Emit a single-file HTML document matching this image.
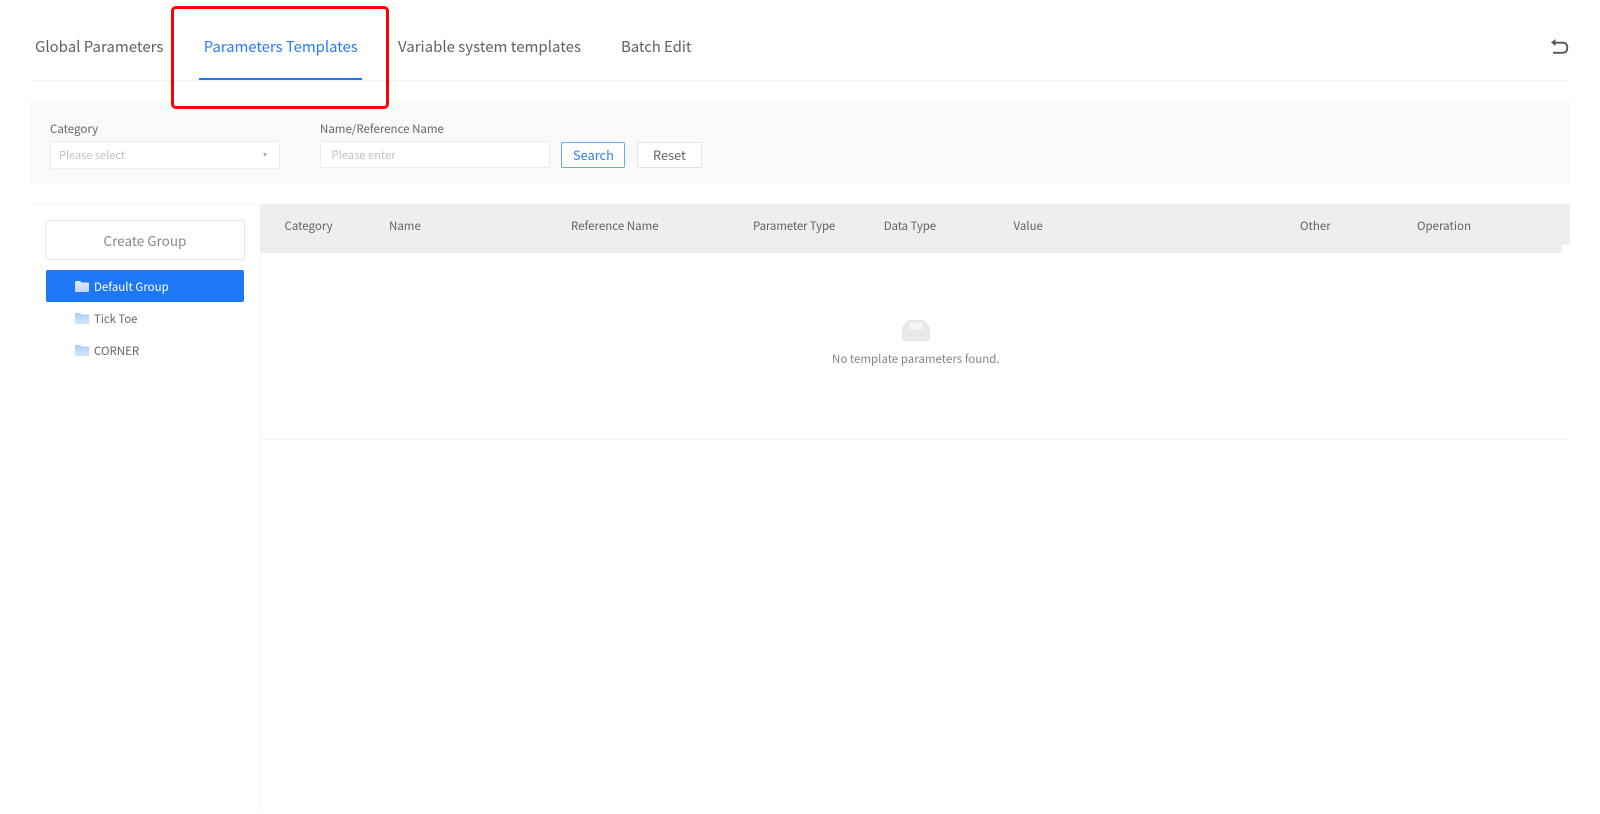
<!DOCTYPE html>
<html lang="en"><head><meta charset="utf-8"><title>Parameters Templates</title>
<style>
html,body{margin:0;padding:0;width:1600px;height:814px;overflow:hidden;background:#fff}
body{position:relative;font-family:"Noto Sans CJK SC","Liberation Sans",sans-serif;color:#666}
.a{position:absolute}
.t{position:absolute;white-space:nowrap;line-height:20px}
.tab{font-size:15px;top:37px;color:#606266}
.th{font-size:11.5px;top:216px;color:#606266}
.lb{font-size:11.5px;top:119px;color:#666}
.box{position:absolute;background:#fff;box-sizing:border-box;border:1px solid #ebebeb;border-radius:2px}
</style></head><body>
<div class="t tab" style="left:35px">Global Parameters</div>
<div class="t tab" style="left:203.700px;color:#2f7cf6;letter-spacing:-.08px">Parameters Templates</div>
<div class="t tab" style="left:398px">Variable system templates</div>
<div class="t tab" style="left:621px;letter-spacing:-.1px">Batch Edit</div>
<div class="a" style="left:30px;top:80px;width:1540px;height:1px;background:#f3f3f3"></div>
<div class="a" style="left:199px;top:78px;width:163px;height:2px;background:#1e78f5"></div>
<svg class="a" style="left:1550px;top:37px" width="20" height="20" viewBox="0 0 20 20"><path d="M1 5.500L5.500 2V9Z" fill="#555"/><path d="M5 5.700H12.500C15.700 5.700 17.300 7.600 17.300 10.800C17.300 14 15.700 15.800 12.500 15.800H3" fill="none" stroke="#555" stroke-width="1.800"/></svg>

<div class="a" style="left:30px;top:101px;width:1540px;height:83px;background:#f9f9f9"></div>
<div class="t lb" style="left:50px">Category</div>
<div class="box" style="left:50px;top:141px;width:230px;height:28px"></div>
<div class="t" style="left:59px;top:145px;font-size:11px;color:#c0c0c0">Please select</div>
<div class="a" style="left:262.500px;top:153px;width:0;height:0;border-left:2.500px solid transparent;border-right:2.500px solid transparent;border-top:4px solid #aaa"></div>
<div class="t lb" style="left:320px">Name/Reference Name</div>
<div class="box" style="left:319.500px;top:141px;width:230px;height:27px"></div>
<div class="t" style="left:331.500px;top:145px;font-size:11.200px;color:#c0c0c0">Please enter</div>
<div class="box" style="left:561px;top:142px;width:64px;height:25.500px;border-color:#6ea4f8"></div>
<div class="t" style="left:573px;top:145px;font-size:12.800px;color:#2f7cf6">Search</div>
<div class="box" style="left:637px;top:142px;width:64.500px;height:25.500px;border-color:#e2e2e2"></div>
<div class="t" style="left:653px;top:145px;font-size:12.800px;color:#666">Reset</div>

<div class="a" style="left:30px;top:204px;width:230px;height:1px;background:#f5f5f5"></div>
<div class="a" style="left:260px;top:204px;width:1px;height:608px;background:#f4f4f4"></div>
<div class="box" style="left:45px;top:220px;width:200px;height:40px;border-color:#e9e9e9"></div>
<div class="t" style="left:103.500px;top:230px;font-size:13.500px;color:#888">Create Group</div>
<div class="a" style="left:46px;top:270px;width:198px;height:32px;background:#1e78f5;border-radius:2px"></div>
<svg class="a" style="left:75px;top:281px" width="14" height="11" viewBox="0 0 14 11"><defs><linearGradient id="g1" x1="0" y1="0" x2="0" y2="1"><stop offset="0" stop-color="#dfeafc"/><stop offset="1" stop-color="#bcd6fb"/></linearGradient><linearGradient id="g2" x1="0" y1="0" x2="0" y2="1"><stop offset="0" stop-color="#a9cdf9"/><stop offset="1" stop-color="#d3e5fd"/></linearGradient></defs><path d="M0 1C0 .4.400 0 1 0H5L6.500 1.500H13C13.600 1.500 14 1.900 14 2.500V10C14 10.600 13.600 11 13 11H1C.4 11 0 10.600 0 10Z" fill="url(#g1)"/></svg>
<div class="t" style="left:94px;top:277px;font-size:11.500px;color:#fff">Default Group</div>
<svg class="a" style="left:75px;top:313px" width="14" height="11" viewBox="0 0 14 11"><path d="M0 1C0 .4.400 0 1 0H5L6.500 1.500H13C13.600 1.500 14 1.900 14 2.500V10C14 10.600 13.600 11 13 11H1C.4 11 0 10.600 0 10Z" fill="url(#g2)"/></svg>
<div class="t" style="left:94px;top:309px;font-size:11.300px">Tick Toe</div>
<svg class="a" style="left:75px;top:345px" width="14" height="11" viewBox="0 0 14 11"><path d="M0 1C0 .4.400 0 1 0H5L6.500 1.500H13C13.600 1.500 14 1.900 14 2.500V10C14 10.600 13.600 11 13 11H1C.4 11 0 10.600 0 10Z" fill="url(#g2)"/></svg>
<div class="t" style="left:94px;top:341px;font-size:11.500px">CORNER</div>

<div class="a" style="left:260px;top:204px;width:1310px;height:41px;background:#eeeef0"></div>
<div class="a" style="left:260px;top:245px;width:1302px;height:7.500px;background:#eeeef0"></div>
<div class="t th" style="left:284.500px">Category</div>
<div class="t th" style="left:389px">Name</div>
<div class="t th" style="left:571px">Reference Name</div>
<div class="t th" style="left:753px;letter-spacing:-.15px">Parameter Type</div>
<div class="t th" style="left:883.700px;letter-spacing:-.1px">Data Type</div>
<div class="t th" style="left:1013.500px">Value</div>
<div class="t th" style="left:1300px">Other</div>
<div class="t th" style="left:1417px">Operation</div>

<svg class="a" style="left:902px;top:320px" width="28" height="21" viewBox="0 0 28 21"><path d="M6 0H22L28 7V18C28 20 27 21 25 21H3C1 21 0 20 0 18V7Z" fill="#e8e9eb"/><path d="M8 3H20L22 9.500H6Z" fill="#f6f6f7"/></svg>
<div class="t" style="left:832px;top:349px;font-size:11.500px;color:#858585">No template parameters found.</div>
<div class="a" style="left:260px;top:438.500px;width:1310px;height:1px;background:#f3f3f3"></div>

<div class="a" style="left:171px;top:6px;width:217.500px;height:102.500px;box-sizing:border-box;border:3px solid #f00;border-radius:5px"></div>
</body></html>
